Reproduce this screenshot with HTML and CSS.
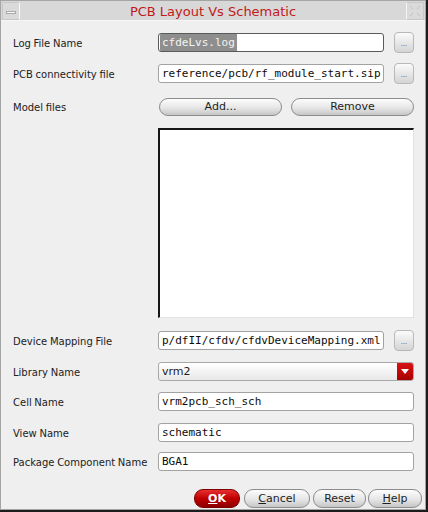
FILE: index.html
```html
<!DOCTYPE html>
<html>
<head>
<meta charset="utf-8">
<title>PCB Layout Vs Schematic</title>
<link rel="stylesheet" href="styles.css">
</head>
<body>
<div class="window">
  <div class="titlebar">
    <div class="tb-btn tb-min"><span class="min-bar"></span></div>
    <div class="title">PCB Layout Vs Schematic</div>
    <div class="tb-btn tb-close">
      <svg width="14" height="14" viewBox="0 0 14 14">
        <path d="M2 2 L5 5 M12 2 L9 5 M2 12 L5 9 M12 12 L9 9" stroke="#c4c4c4" stroke-width="1.3" fill="none" stroke-dasharray="1.5 1"/>
      </svg>
    </div>
  </div>
  <div class="content">
    <div class="row r-log">
      <span class="lbl">Log File Name</span>
      <div class="field focused"><span class="sel">cfdeLvs.log</span></div>
      <button class="dots">...</button>
    </div>
    <div class="row r-pcb">
      <span class="lbl">PCB connectivity file</span>
      <div class="field"><span class="mono">reference/pcb/rf_module_start.sip</span></div>
      <button class="dots">...</button>
    </div>
    <div class="row r-model">
      <span class="lbl">Model files</span>
      <div class="pair">
        <button class="pill">Add...</button>
        <button class="pill">Remove</button>
      </div>
    </div>
    <div class="row r-list">
      <span></span>
      <div class="listbox"></div>
    </div>
    <div class="row r-dev">
      <span class="lbl">Device Mapping File</span>
      <div class="field"><span class="mono">p/dfII/cfdv/cfdvDeviceMapping.xml</span></div>
      <button class="dots">...</button>
    </div>
    <div class="row r-lib">
      <span class="lbl">Library Name</span>
      <div class="combo">
        <span class="combo-text">vrm2</span>
        <span class="combo-arrow"><svg width="8" height="5" viewBox="0 0 8 5"><path d="M0 0 H8 L4 5 Z" fill="#fff"/></svg></span>
      </div>
    </div>
    <div class="row r-cell">
      <span class="lbl">Cell Name</span>
      <div class="field wide"><span class="mono">vrm2pcb_sch_sch</span></div>
    </div>
    <div class="row r-view">
      <span class="lbl">View Name</span>
      <div class="field wide"><span class="mono">schematic</span></div>
    </div>
    <div class="row r-pkg">
      <span class="lbl">Package Component Name</span>
      <div class="field wide"><span class="mono">BGA1</span></div>
    </div>
  </div>
  <div class="footer">
    <button class="pill ok"><u>O</u>K</button>
    <button class="pill b-cancel"><u>C</u>ancel</button>
    <button class="pill b-reset">Reset</button>
    <button class="pill b-help"><u>H</u>elp</button>
  </div>
</div>
</body>
</html>
```

FILE: styles.css
```css
* { box-sizing: border-box; }

html, body {
  margin: 0;
  padding: 0;
}

body {
  width: 428px;
  height: 512px;
  background: #1c1c1c;
  font-family: "DejaVu Sans", sans-serif;
  font-size: 10px;
  color: #222;
  overflow: hidden;
}

.window {
  width: 426px;
  height: 510px;
  background: #efefef;
  border: 1px solid #a4a4a4;
  display: flex;
  flex-direction: column;
}

.titlebar {
  height: 20px;
  background: #d8d8d8;
  border-bottom: 1px solid #f6f6f6;
  display: flex;
  align-items: stretch;
  padding: 1px 1px 0 1px;
}

.tb-btn {
  width: 18px;
  height: 18px;
  display: flex;
  align-items: center;
  justify-content: center;
  background: #dadada;
  border: 1px solid #c8c8c8;
}

.tb-min {
  border-right: 1px solid #f8f8f8;
}

.min-bar {
  width: 10px;
  height: 3px;
  background: #fbfbfb;
  border: 1px solid #a8a8a8;
  margin-top: 2px;
}

.tb-close {
  border-left: 1px solid #f4f4f4;
}

.title {
  flex: 1;
  text-align: center;
  color: #c21a1a;
  font-size: 13px;
  line-height: 19px;
}

.content {
  display: flex;
  flex-direction: column;
  padding: 11px 11px 0 11px;
}

.row {
  display: grid;
  grid-template-columns: 136px 1fr 20px;
  column-gap: 10px;
  align-items: center;
  height: 21px;
}

.r-pcb { margin-top: 10px; }
.r-model { margin-top: 12px; }
.r-list { margin-top: 11px; height: 190px; align-items: stretch; }
.r-dev { margin-top: 12px; }
.r-lib { margin-top: 10px; }
.r-cell { margin-top: 9px; }
.r-view { margin-top: 10px; }
.r-pkg { margin-top: 8px; }

.lbl {
  white-space: nowrap;
  padding-left: 1px;
  padding-top: 1px;
  word-spacing: -0.5px;
}

.field {
  height: 19px;
  background: #fff;
  border: 1px solid #a2a2a2;
  border-radius: 3px;
  display: flex;
  align-items: center;
  padding: 0 1px 0 3px;
  overflow: hidden;
  white-space: nowrap;
}

.field.focused {
  border-color: #5a5a5a;
  padding-left: 1px;
}

.field.wide,
.combo,
.pair,
.listbox {
  grid-column: 2 / 4;
}

.mono,
.sel {
  font-family: "DejaVu Sans Mono", monospace;
  font-size: 11px;
  color: #0c0c0c;
  flex-shrink: 0;
}

.sel {
  background: #8e8e8e;
  color: #f4f4f4;
  padding: 1px 2px;
  line-height: 15px;
}

.dots {
  width: 20px;
  height: 21px;
  padding: 0;
  border: 1px solid #b8b8b8;
  border-radius: 4px;
  background: linear-gradient(#fbfbfb, #d4d4d4);
  font-family: "DejaVu Sans", sans-serif;
  font-size: 7px;
  color: #555;
  line-height: 1;
  padding-top: 3px;
}

.pair {
  display: flex;
  gap: 9px;
  padding-left: 1px;
}

.pill {
  height: 18px;
  padding: 0;
  border: 1px solid #8c8c8c;
  border-radius: 9px;
  background: linear-gradient(#fdfdfd, #e6e6e6 55%, #c6c6c6);
  font-family: "DejaVu Sans", sans-serif;
  font-size: 11px;
  color: #1e1e1e;
  line-height: 16px;
}

.pair .pill {
  flex: 1;
}

.listbox {
  background: #fff;
  border-top: 2px solid #161616;
  border-left: 2px solid #161616;
  border-right: 1px solid #e2e2e2;
  border-bottom: 1px solid #e2e2e2;
}

.combo {
  height: 19px;
  border: 1px solid #a8a8a8;
  border-radius: 3px;
  background: linear-gradient(#ffffff, #e8e8e8);
  display: flex;
  align-items: center;
  overflow: hidden;
}

.combo-text {
  flex: 1;
  padding-left: 3px;
  font-size: 11px;
}

.combo-arrow {
  width: 16px;
  align-self: stretch;
  background: linear-gradient(#d81414, #a80000);
  display: flex;
  align-items: center;
  justify-content: center;
}

.footer {
  display: flex;
  justify-content: flex-end;
  gap: 2px;
  margin-top: 17px;
  padding-right: 3px;
}

.footer .pill {
  height: 19px;
  line-height: 17px;
}

.ok {
  width: 46px;
  background: linear-gradient(#e83030, #c00000 50%, #8e0000);
  border-color: #7a0000;
  color: #fff;
  font-weight: bold;
  margin-right: 2px;
}

.b-cancel { width: 66px; margin-right: 1px; }
.b-reset { width: 53px; }
.b-help { width: 54px; }
```
